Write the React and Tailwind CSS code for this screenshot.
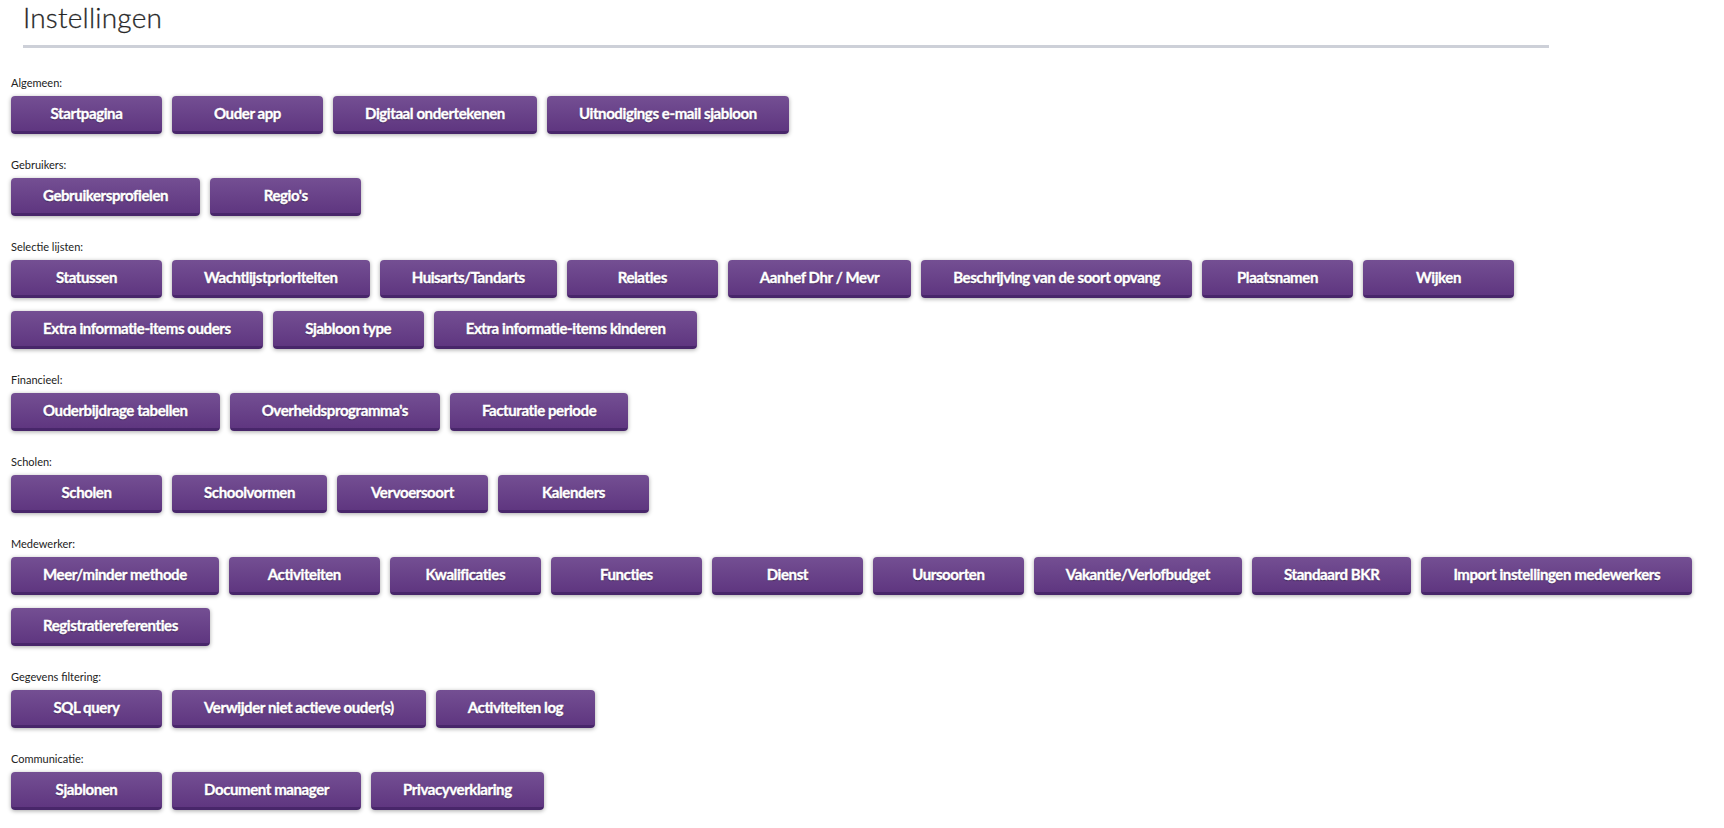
import React from 'react';

const sections = [
  { label: 'Algemeen:', items: ['Startpagina', 'Ouder app', 'Digitaal ondertekenen', 'Uitnodigings e-mail sjabloon'] },
  { label: 'Gebruikers:', items: ['Gebruikersprofielen', "Regio's"] },
  {
    label: 'Selectie lijsten:',
    items: [
      'Statussen',
      'Wachtlijstprioriteiten',
      'Huisarts/Tandarts',
      'Relaties',
      'Aanhef Dhr / Mevr',
      'Beschrijving van de soort opvang',
      'Plaatsnamen',
      'Wijken',
      'Extra informatie-items ouders',
      'Sjabloon type',
      'Extra informatie-items kinderen',
    ],
  },
  { label: 'Financieel:', items: ['Ouderbijdrage tabellen', "Overheidsprogramma's", 'Facturatie periode'] },
  { label: 'Scholen:', items: ['Scholen', 'Schoolvormen', 'Vervoersoort', 'Kalenders'] },
  {
    label: 'Medewerker:',
    items: [
      'Meer/minder methode',
      'Activiteiten',
      'Kwalificaties',
      'Functies',
      'Dienst',
      'Uursoorten',
      'Vakantie/Verlofbudget',
      'Standaard BKR',
      'Import instellingen medewerkers',
      'Registratiereferenties',
    ],
  },
  { label: 'Gegevens filtering:', items: ['SQL query', 'Verwijder niet actieve ouder(s)', 'Activiteiten log'] },
  { label: 'Communicatie:', items: ['Sjablonen', 'Document manager', 'Privacyverklaring'] },
];

function SettingButton({ children }) {
  return (
    <button className="h-[38px] min-w-[151px] px-[32px] rounded-[4px] bg-gradient-to-b from-[#744f93] to-[#5f3680] border-b-[3px] border-[#48266a] shadow-[0_1px_4px_rgba(0,0,0,0.35)] text-white text-[15px] font-bold tracking-[-0.4px] [-webkit-text-stroke:0.35px_white] [text-shadow:0_1px_1px_rgba(0,0,0,0.4)] whitespace-nowrap">
      {children}
    </button>
  );
}

export default function App() {
  return (
    <div className="min-h-screen bg-white font-['Lato',sans-serif] text-[#333]">
      {/* Header */}
      <div className="pl-[23px]">
        <h1 className="text-[28px] leading-[34px] font-light text-[#1e1e1e] tracking-[0.2px] [-webkit-text-stroke:0.3px_#333]">Instellingen</h1>
        <div className="mt-[11px] h-[3px] w-[1526px] bg-[#cdd0d8]" />
      </div>

      <div className="pl-[11px] pr-[10px] mt-[28px]">
        {sections.map((s) => (
          <div key={s.label} className="mb-[24px]">
            <div className="text-[11px] leading-[14px] text-[#222] mb-[6px]">{s.label}</div>
            <div className="flex flex-wrap gap-x-[10px] gap-y-[13px]">
              {s.items.map((it) => (
                <SettingButton key={it}>{it}</SettingButton>
              ))}
            </div>
          </div>
        ))}
      </div>
    </div>
  );
}
